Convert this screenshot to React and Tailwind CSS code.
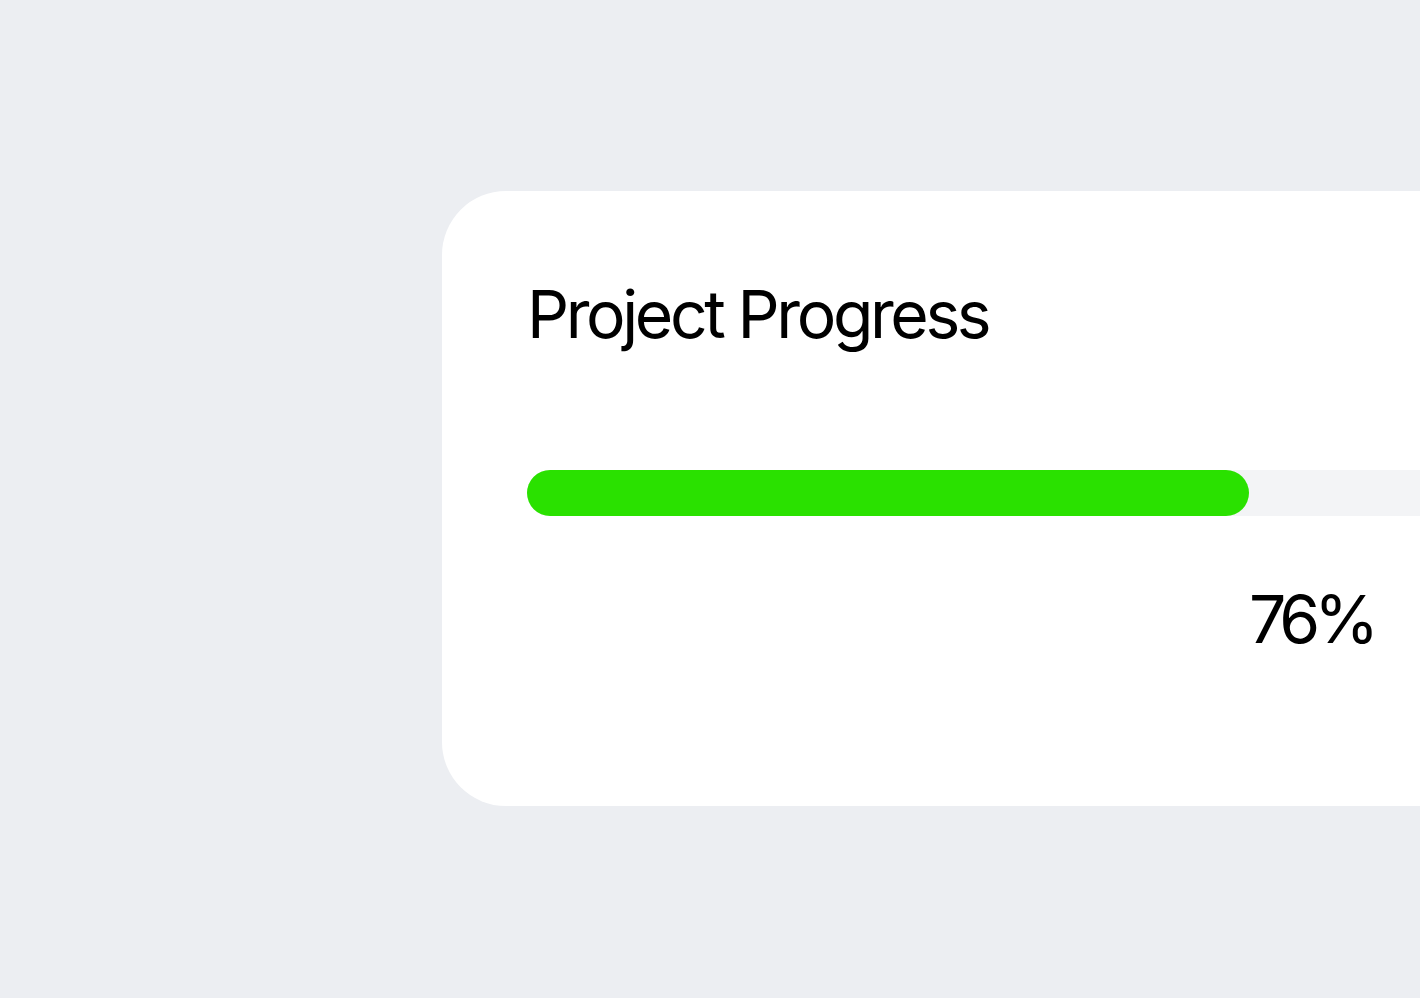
export default function App() {
  const pct = 76;
  return (
    <div className="w-[1420px] h-[998px] overflow-hidden bg-[#eceef2] pl-[442px] pt-[191px]" style={{ fontFamily: "Inter, 'Noto Sans', sans-serif" }}>
      <div className="w-[1120px] h-[615px] bg-white rounded-[64px] px-[85px] pt-[90px] flex flex-col">
        <h1 className="text-[66px] leading-[66px] text-black font-normal tracking-[-3.4px]">Project Progress</h1>
        <div className="mt-[123px] w-[950px] h-[46px] bg-[#f3f4f6] rounded-full relative">
          <div className="h-full rounded-full bg-[#2ae100]" style={{ width: `${pct}%` }} />
        </div>
        <div className="relative w-[950px] h-[80px] mt-[70px]">
          <span className="absolute top-0 text-[66px] leading-[66px] text-black tracking-[-6px]" style={{ left: `${pct}%` }}>{pct}%</span>
        </div>
      </div>
    </div>
  );
}
